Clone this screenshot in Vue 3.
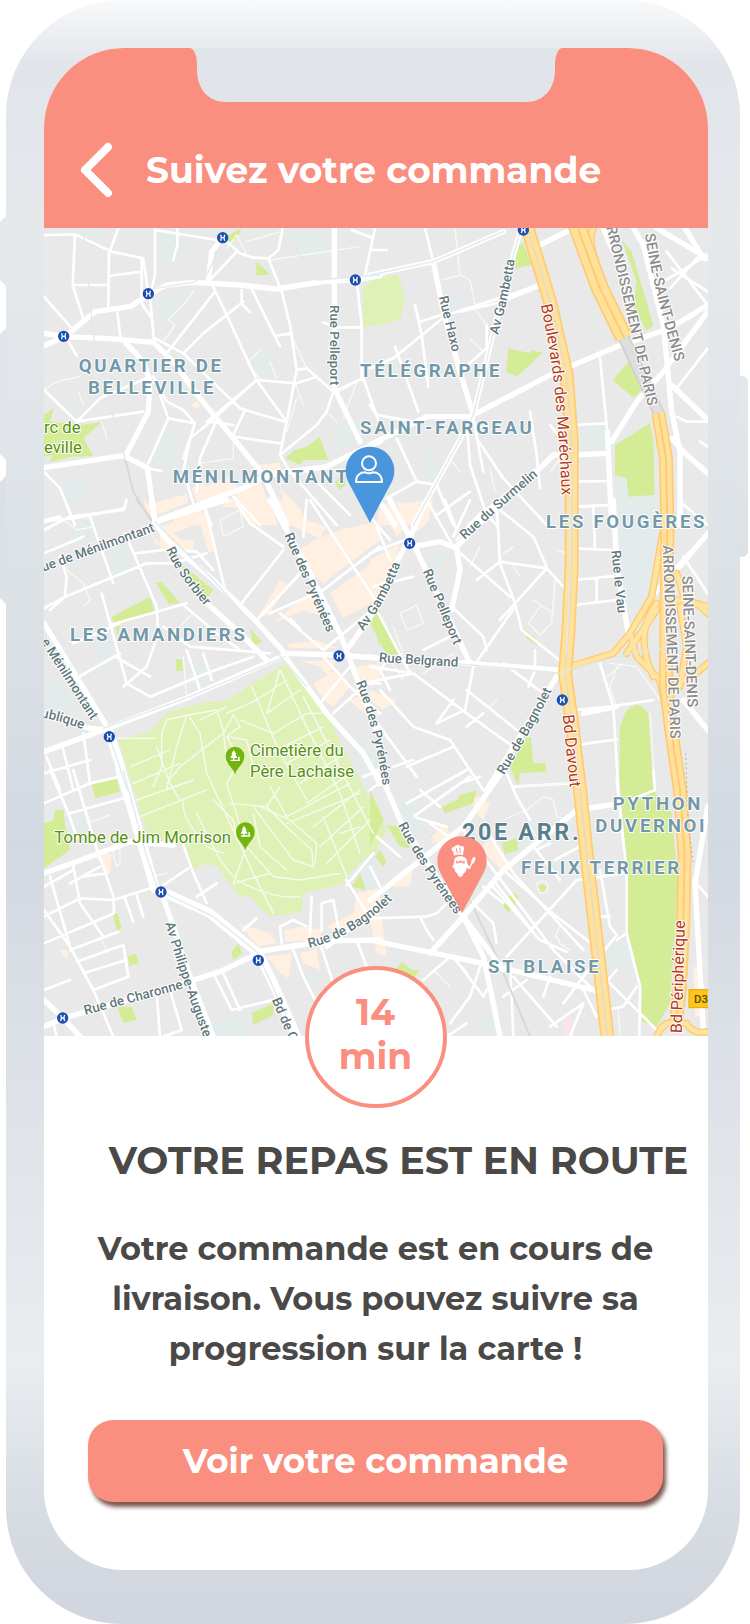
<script setup>
// Map units are thirds of a pixel; each tile has its own origin.
const tiles = [
  {
    x: 120, y: 675,
    pale: 'M110 9h75v45h-75z M345 20h60l30 60-60 40z M735 25h140v60l-90 15z M350 220l90-20-70 110z M620 410l60-35 30 60-60 25z M870 600l90-20 20 60-80 30z M360 620l60 10-30 90-60-20z M50 760l80 0 10 70-60 10z M600 810l60 0 10 50-60-10z M70 530l50 30-40 30z',
    light: 'M968 185L1020 160V300L970 305Z',
    park: 'M12 570L42 548 30 590 120 600 185 592 130 640 160 692 95 695 30 712 38 690 12 695ZM650 110L690 148 648 152ZM735 700L765 675 800 665 840 635 850 665 865 705 790 705 780 720ZM550 40L605 9 590 40 560 55ZM885 770L912 745 916 780 898 795Z',
    shop: 'M310 822L325 838 440 808 445 832 350 870 330 890ZM455 790L480 770 500 785 560 755 600 790 520 815 470 830ZM650 720L720 712 728 780 690 740ZM640 762L660 770 715 900H640L600 850 545 845ZM715 770L730 800 785 855 765 900H750ZM400 880L480 850 500 900H400ZM455 540l12-12 15 14-12 12z',
    minor: 'M12 30L105 28 215 80 310 100 325 210M105 28L98 180 128 275M235 9L207 85 205 250M205 153L305 140M305 100V235L330 272M345 9V150L330 210 342 350M345 15L530 45M412 9V60L400 105M105 180H200M12 215L95 310M80 340L110 392M232 262L243 350M548 40L600 85 640 98 685 100 715 75 728 9M685 100L725 200 750 300 770 435 740 590 720 690 750 740 890 900M510 165L590 80M525 200L380 385M510 165L560 270 650 465 740 590M610 230L490 325 430 385M605 195V235L630 262M635 192L720 365M710 332L755 325M345 340L430 385 600 550 740 592M650 465L770 475 830 455M770 435L800 430 880 500 860 560 830 600 720 690M650 465L500 600 450 640 430 740 460 835M360 510L385 580 325 715M330 455L180 520 110 590 12 495M110 590L310 560M385 580L465 595 430 700M340 455L380 530 430 555 465 595M530 585L480 700 470 800M580 635L720 655M575 640L615 555M500 590L650 465M880 500L970 460 1020 600M950 165L965 300V460M850 292 885 307H965M1005 9L975 150M935 15L1000 40M12 740L60 790 105 900M12 890L70 882 100 880 255 850V840M322 730L365 738M800 740L930 870M580 815L660 900M490 840L515 900M510 590L580 600',
    thin: 'M370 350L405 300 385 285 430 240 460 200M750 325L800 430M765 475L790 540M770 520L740 620M690 105L960 65M560 70L590 30 620 90M620 50L720 20M660 375L620 415 660 460M690 410L710 460M115 500L130 540M185 590L200 640M480 715L580 700V640M890 505L950 470 910 580M860 560L890 590M12 495L50 470 120 455',
    major: 'M12 325L75 335 200 340 340 352 400 410 480 520 580 640 670 750 740 900M12 362L75 335 165 260 270 245 325 210 380 180 460 172 600 180 710 192 860 168 950 165 1020 152M548 38L515 80 505 165M883 9V490L960 650M12 728L250 692 322 728 345 890M345 890L500 830 620 785 680 750 860 725 930 690 1020 650M258 355L310 410 330 470 325 560 258 690',
    waterline: 'M130 9L160 330 210 540 255 700M548 50L500 150 460 172 345 190M740 30L830 165 1020 150',
    grayline: 'M255 700L280 800 335 890',
  },
  {
    x: 1110, y: 675,
    pale: 'M610 600H712V675H610ZM735 760H775V820H850V900H735ZM240 225l50-20 10 40-50 10zM150 680l30-10 30 80-30 10z',
    light: 'M0 170L20 155 85 150 105 220 90 285 10 305 0 290Z',
    park: 'M440 65L460 55 485 120 435 130ZM415 370L480 385 485 376 518 383 440 455 408 440ZM755 45L785 80 850 300 830 318 790 240 800 170ZM780 405L820 490 790 518 728 465ZM735 660L840 595 850 640 853 810 775 815 770 760 735 750Z',
    shop: 'M30 850L60 830 80 900H20ZM80 825L120 860 130 900H100ZM140 860L185 875 165 900H140Z',
    minor: 'M165 9L190 110M0 430L70 400 230 270 510 180M75 365L145 560M270 260L400 230M350 300V370L270 440M0 540L20 570 130 590M290 590L300 720 350 870 380 900M320 640L400 760 530 900M480 560L500 690 510 790M310 580L340 740M605 600L712 595M605 770L715 768M630 845L720 840M920 575L950 590H1013M920 490L1013 370M930 830L1013 900M890 80L1013 240M900 190L990 90M880 170L1013 90M690 400L700 500 712 620M80 640L140 770 200 780 250 900M140 770L50 820M200 870L300 800M135 240L155 330 175 485M0 75H50M150 290L230 265M905 130L1013 200M990 650L1013 665M540 600L580 650',
    thin: 'M255 9L270 150 215 165M270 150L300 165 320 260 350 300M135 240L150 290M300 340L340 380M240 700L270 740M540 740L580 690M360 730L375 800',
    major: 'M0 150L190 110 400 20M190 110L220 260 270 440 310 570M450 20L400 200 310 570 130 900M0 660L170 575 300 575 540 450 740 365 900 310 1013 240M410 220L510 180M700 9L730 80M790 9L820 60 850 180 880 300 905 560 930 680V900M600 690L712 685M725 650L800 530 880 440 1013 260M712 620L725 900M300 900L520 720 550 690 600 690M905 480L1013 585M905 640L940 680 1013 745M860 9L1013 100M945 9L1000 100H1013M500 65L590 20M10 800L75 900',
    rail: 'M760 335L868 568',
    waterline: 'M0 150L190 110 400 20M450 20L400 200 310 570 130 900',
  },
  {
    x: 120, y: 1500,
    pale: 'M20 550L90 500 130 590 60 630H20ZM190 190L260 130 290 200 220 250ZM160 430l40 0 30 70-50 10zM470 500l40-20 10 60-40 10zM940 700L1020 780 980 850 940 780ZM110 60l60 10-20 60-60-10z',
    light: 'M735 490L860 640 890 700 970 860 1010 950 1005 1045 920 1130 905 1155 790 1180 785 1235 690 1250 630 1190 595 1185 530 1100 500 1090 460 1110 430 1035 320 1000 235 720 330 695 380 640 480 610 560 600 640 550Z',
    park: 'M215 350L330 290 345 340 240 372 235 410ZM348 250L365 245 420 310 385 312ZM420 190L520 270 500 295 440 230ZM408 478H425L430 512H408ZM630 385L665 425 640 440ZM665 455l20 15-10 8zM990 340L1020 320V440Z',
    shop: 'M360 80L495 35 510 70 525 155H505L480 70 400 100 425 120H460V150H360ZM320 10L335 110 375 140 345 130ZM680 0H760L800 60 860 80 840 115 740 70ZM825 120L900 90 990 70 1020 70V120L850 250 810 215 775 150ZM870 280L1010 180V300L910 355ZM655 350L720 240 745 255 685 345ZM700 370L790 290 835 275 880 380 850 350 790 330ZM745 432L830 420 890 445H745ZM780 482L890 480 865 530 840 500ZM820 550L890 510 930 560 880 620 850 600ZM940 500L1020 490V540L975 560ZM925 600L960 590 1020 640 1000 660Z',
    minor: 'M12 90L90 50 250 30 260 0M12 160L130 110M30 330L75 290 320 190 400 190 500 160M60 170L80 230 75 290 12 325M150 50L220 250M255 100L350 320 355 400 320 500 250 560M185 280L260 550 330 590 500 520 640 470M210 375L440 310M430 315L530 400 600 450M370 380L450 440 690 460M440 450L480 570M490 460L515 540M100 540L240 460M225 470L330 530M285 160L370 150 470 155 520 210M495 20L555 270M590 10L630 70 730 140M810 0L940 200 1020 320M730 150L620 290 605 310M655 355L790 210M690 340L850 270 940 200 1020 140M850 450L1020 310M850 450L720 340M850 470L930 560 1020 640M750 355L780 385M840 610L930 500M880 640L980 550H1020M20 770L60 870M65 730L100 870M130 700L150 850M12 820L150 780M970 830L1020 810M800 0L790 110M100 430L240 370M12 60L60 50',
    thin: 'M70 60L110 90 160 80M60 180L90 220 130 250 150 300 130 320M540 60L600 30 610 80 550 110ZM430 470L440 590M400 400L460 340M235 715H350M365 700L380 660 445 645 480 700 500 820M350 740L390 850 420 900M365 700V800L340 860M440 645L410 740 380 870M445 645L530 630 550 690 560 790M480 660L560 620M550 700L580 645 600 680 560 710 620 720 640 800M560 710L600 780 560 850M550 700L420 800 380 850M635 560L720 760 800 900M560 640L650 600 740 540M720 510L680 640 780 570M600 660L700 700 800 640 860 640M690 760L850 680M740 790L870 720M780 850L900 770M800 910L930 820M820 980L960 870M840 1040L970 920M860 1090L990 960M720 510L800 680 900 880 960 1060M790 590L1000 1000M270 800L390 750M280 850L420 790M290 900L460 840M300 950L500 870M500 820L640 1120 700 1240M560 850L620 1040M620 1040L580 1150 690 1120M620 1040L700 1130 780 1140 900 1120M640 920L700 1000 760 1080 820 1100 815 1050 740 980 680 920M660 920L750 960 830 1030 825 1090M640 940L660 1040 740 1110M590 1140Q700 1200 780 1190M430 900Q420 950 500 1040L550 1060M470 940L540 1080 580 1130M690 860L740 950 930 850M740 970L960 880M900 1000L960 980M850 950L920 1130M570 910L680 920 720 860M520 900L580 960 590 1020',
    major: 'M335 0L345 65 380 120 520 240 640 355 735 460M345 65L560 0M690 0L800 200 900 400 960 560 1020 720M735 460L900 465 1020 475M12 755L190 690 450 590 735 465M195 670L12 370M480 290L600 400 680 480M12 640L150 685 200 690M735 470L860 640 970 760 1020 850M920 450L1020 310',
    broad: 'M205 690L235 780 300 1010 345 1165',
    waterline: 'M345 65L520 240 600 330 800 560M205 700L262 870M190 685L450 590 735 470',
    grayline: 'M290 0L345 70',
  },
  {
    x: 1110, y: 1500,
    pale: 'M740 0H865L840 290 790 390 760 200ZM180 170L240 150 210 200ZM10 800l50 40-40 30z',
    park: 'M20 325L95 462 50 465 0 370V340ZM460 385L510 428 500 435 470 415ZM482 710L490 790H528V815L450 820 445 860 420 800 465 715ZM750 680L765 640Q800 590 835 640L850 870V870L905 940 925 1160 900 1510 860 1580 815 1565V1460L775 1310 770 1110 748 830Z',
    shop: 'M40 40L60 20 100 90 80 110ZM95 10L190 0 170 70 135 100ZM0 180L90 130 60 240 0 290ZM0 480L20 540 0 560ZM0 570L80 600 40 630 0 600Z',
    minor: 'M250 325L340 410 350 450M310 500L285 630 200 670M290 570L440 690M0 545L130 520 290 640 430 740M0 500L130 520M0 640L140 830M30 570L130 680 240 720 340 870M260 150L420 290M380 10L390 190 435 310 455 390 580 490M390 185L530 205 585 265M435 320L310 500M320 240L390 185M530 200L490 110 390 30M530 205L390 360M615 20L725 15M670 15L675 145M610 145L725 150M615 240L730 228M680 235V300M615 315L740 300M690 490L730 620 745 870M615 630L720 620M620 735L740 718M400 490L520 580M495 450V510L475 560M435 860L600 850M200 670L250 600M60 470L30 510 60 570M0 160L130 110M20 80L60 180M225 0L260 90M300 0L250 110M260 120L330 40M40 840L0 870M70 800L130 780M110 800L250 740M340 640L290 680M720 620L850 600M10 260L130 230M0 50L60 120M170 0L250 140M270 850L330 830M940 170L1013 280M20 330L120 520M160 450L240 410',
    thin: 'M90 340L140 315 160 370 110 390ZM70 380L120 520M555 240L545 370 510 405 475 370 510 320M490 300L550 340M560 150L590 160M360 620L380 600M330 140L300 200M430 200L450 230M720 490L800 500 870 600M700 540L760 490M740 620L720 560 740 500M60 480L100 540M160 520L250 460M840 640L855 870M430 140L400 160',
    major: 'M0 470L300 490 585 512M60 0L130 130 220 320 300 490M170 0L130 90 0 340M130 140L210 125 260 145 270 210 245 330M260 140L400 0M560 530L350 870M930 200L1013 100M845 290L960 160M940 600L1013 690M730 0L740 200 775 400M640 640L740 620',
    link: 'M878 100L845 290 780 400 730 460 600 500M780 400L800 470 870 540 890 640M770 460L860 330M860 310Q790 400 850 530M895 310Q960 280 1013 340M900 560Q960 540 1013 490M920 220L945 300 1013 320M930 320L950 440 930 560',
    waterline: 'M600 220L590 460M585 512L780 460 900 440H1013M250 490L585 520M0 460L250 490M600 0V200',
  },
  {
    x: 120, y: 2310,
    pale: 'M80 130l50 0 10 50-50 10zM520 760L600 730 640 790 600 800H520ZM790 610l40 0 10 40-40 0zM960 290L1010 270 1020 350 980 350Z',
    park: 'M155 40L230 20 240 65 165 85ZM12 160L40 150 45 120 70 120 75 160 90 240 12 295ZM218 430H232L245 475 232 487ZM263 558L288 552 295 580 268 588ZM575 545L595 522 607 550 580 570ZM232 710L275 710 290 750 250 758ZM635 730L700 700 700 735 640 765ZM935 350L960 310 978 360Z',
    shop: 'M595 460L690 490 710 520 655 530ZM735 480L780 470 850 480 830 510 735 515ZM860 470L940 430 950 370 1020 355V390L900 490ZM675 560L755 550 745 625 720 610 700 580ZM780 550L830 535 840 600 790 580ZM1000 440L1020 420V500H1000ZM185 255L215 250 210 310 198 318ZM62 540l18 0 5 20-15 0z',
    minor: 'M12 100L150 40 240 20M90 130L250 85M30 320L90 530 160 660 220 800M12 440L120 385 220 390 345 350M100 290L120 400 190 500M180 260L220 380 222 430 12 520M12 420L90 530M90 540L235 485M110 575L250 525 265 620 160 660M130 610L260 570M255 385L280 455M290 375L310 440M12 350L100 300M12 660L90 630M370 345L445 295M430 225L460 310 500 400M520 610L575 720 700 690M550 610L600 720M350 670L360 800M390 660L425 780 370 800M760 540L790 620 825 690M725 520L720 470 760 450 800 470M845 480V400L880 390 900 500M815 380L810 490M920 330L980 430M920 345L1000 250M30 0L85 130 110 200M100 0L180 270M90 340L180 290M125 320L200 310M470 380L530 340M610 480L650 445M40 760L50 800M840 520L880 640M950 510L980 590',
    thin: 'M215 230L230 290 240 280V220M330 320L380 310M140 160L210 135M180 500L200 540',
    major: 'M12 310L150 260 270 215 400 225M365 370L400 470 450 620 520 800M655 550L540 605 350 665 70 745 12 770M655 545L780 525 900 512 1020 510M12 690L70 745 120 800M860 530L1020 400',
    broad: 'M240 0L300 200 345 355 510 430 655 550 700 640 770 800',
    waterline: 'M250 0L320 260 355 360 520 440 650 545 740 740',
  },
  {
    x: 1110, y: 2310,
    pale: 'M90 120L140 90 160 170 110 200ZM290 320l60-30 20 50-60 30zM690 570L770 500 780 580 720 620ZM300 750l60-20 20 50-60 10zM400 220l60-30 20 30-60 20z',
    light: 'M0 60L30 120 50 180 20 240 0 260Z',
    park: 'M215 110L260 90 270 75 320 60 310 100 225 130ZM50 165L90 170 120 235 90 230ZM15 260L30 240 50 275 40 290ZM395 220L440 205 445 240 405 252ZM392 400L430 368 448 380 415 428ZM505 352l10-10 15 8-8 15-12 2zM75 600L95 575 125 600 150 600 130 625ZM0 60L40 150 0 230Z',
    shop: 'M180 210L220 160 240 190 210 230ZM300 90L325 80 360 100 340 150 320 130ZM330 230L360 210 430 290 400 310ZM0 450L35 440 50 560 20 550ZM70 320L130 280 120 350 70 350ZM970 590H985L1000 740H975Z',
    minor: 'M230 170L130 140 300 20M150 60L210 110M110 100L290 0M410 10L440 80 480 150M280 180L550 540 680 670M360 340L510 510 590 545M400 300L560 440 690 540M180 160L250 210M350 180L430 310 640 540M410 560L620 330 760 310M490 230L570 330M370 330L500 500M290 380L370 460 380 520M500 240L540 220M555 270L610 240 660 215M690 300L720 470 740 495M680 440H720M150 440L170 480 190 510M340 350L400 400M0 445L170 440 200 430 230 400M740 495L640 620 580 700M740 30L770 300 770 490 810 650 808 800M770 490L740 510M700 620L860 780M680 670L740 600M640 660L680 740M160 630L240 560M250 560L340 680 350 660M420 580L430 800M340 560L300 680 240 760M430 620L560 770M540 620L520 680M470 630L400 680M710 720L760 710 800 650M780 90L855 60 850 0M980 340L1013 380M230 800L290 760M540 770L640 700 600 800M20 0L50 60M0 290L30 350M20 200L90 260',
    thin: 'M400 150L470 120 520 80 550 90 560 140 600 150M480 170L500 200M560 500L570 520 600 540M745 720L750 790M570 470L555 500M190 600L240 650M280 590L310 640M500 345Q505 330 525 335Q540 345 530 365L510 370ZM450 50L590 40',
    major: 'M40 30L90 150 180 290 280 440 340 560 370 700 390 800M400 0L280 170 0 390M615 125L400 300 280 440 180 550M0 510L340 580 670 660M620 120L750 100M1013 110L975 340 1000 780M280 440L400 600',
    waterline: 'M60 60L200 220',
    grayline: 'M300 390L380 560 480 800',
  },
]

const roadLabels = [
  [120, 675, 'M870 240V520', 'Rue Pelleport'],
  [1110, 675, 'M206 216L256 420', 'Rue Haxo'],
  [1110, 675, 'M384 330Q418 210 440 70', 'Av Gambetta'],
  [1110, 1500, 'M284 120L396 20 516 -84', 'Rue du Surmelin'],
  [120, 1500, 'M-14 224L360 88', 'Rue de Ménilmontant'],
  [120, 1500, 'M378 148Q410 225 510 335', 'Rue Sorbier'],
  [120, 1500, 'M733 106L878 436', 'Rue des Pyrénées'],
  [120, 1500, 'M970 394Q1044 296 1092 165', 'Av Gambetta'],
  [120, 1500, 'M2 425L188 715', 'e Ménilmontant'],
  [120, 1500, 'M2 652Q70 664 150 696', 'ublique'],
  [120, 1500, 'M948 548Q1010 700 1034 900', 'Rue des Pyrénées'],
  [1110, 1500, 'M158 214L266 470', 'Rue Pelleport'],
  [1110, 1500, 'M26 486L290 502', 'Rue Belgrand'],
  [1110, 1500, 'M724 152L746 370', 'Rue le Vau'],
  [1110, 1500, 'M402 826Q486 690 562 540', 'Rue de Bagnolet'],
  [120, 2310, 'M808 534Q950 500 1076 370', 'Rue de Bagnolet'],
  [120, 2310, 'M376 460Q430 650 510 850', 'Av Philippe-Auguste'],
  [120, 2310, 'M136 735L450 650', 'Rue de Charonne'],
  [120, 2310, 'M695 690L765 850', 'Bd de C'],
  [1110, 2310, 'M84 166Q148 286 275 460', 'Rue des Pyrénées'],
  [1110, 675, 'M512 240C552 430 562 520 580 900', 'Boulevards des Maréchaux', 'red'],
  [1110, 1500, 'M578 645L604 900', 'Bd Davout', 'red'],
  [1110, 2310, 'M935 790L947 400', 'Bd Périphérique', 'red'],
  [1110, 675, 'M702 -22Q770 260 846 600', 'ARRONDISSEMENT DE PARIS', 'limit'],
  [1110, 675, 'M824 28Q858 230 940 490', 'SEINE-SAINT-DENIS', 'limit'],
  [1110, 1500, 'M878 136L904 790', 'ARRONDISSEMENT DE PARIS', 'limit'],
  [1110, 1500, 'M936 228L956 700', 'SEINE-SAINT-DENIS', 'limit'],
]

const places = [
  [236, 1115, 'QUARTIER DE', 'area'],
  [264, 1182, 'BELLEVILLE', 'area'],
  [518, 1448, 'MÉNILMONTANT', 'area'],
  [1080, 1132, 'TÉLÉGRAPHE', 'area'],
  [1080, 1302, 'SAINT-FARGEAU', 'area'],
  [1638, 1584, 'LES FOUGÈRES', 'area'],
  [210, 1923, 'LES AMANDIERS', 'area'],
  [1838, 2430, 'PYTHON', 'area'],
  [1786, 2496, 'DUVERNOI', 'area'],
  [1563, 2622, 'FELIX TERRIER', 'area'],
  [1464, 2918, 'ST BLAISE', 'area'],
  [1386, 2520, '20E ARR.', 'town'],
  [132, 1300, 'rc de', 'poi'],
  [132, 1360, 'eville', 'poi'],
  [750, 2268, 'Cimetière du', 'poi'],
  [750, 2332, 'Père Lachaise', 'poi'],
  [163, 2530, 'Tombe de Jim Morrison', 'poi'],
]

const stations = [
  [668, 713], [445, 881], [191, 1009], [1066, 840], [1570, 690], [1229, 1630],
  [1017, 1968], [328, 2210], [1687, 2100], [483, 2676], [775, 2881], [188, 3054],
]

const trees = [[705, 2270], [736, 2497]]

const boulevard = 'M470 0L540 230 590 450 605 650 605 1025 595 1225 585 1345 605 1485 630 1695 655 1935 690 2235 712 2435'
const ringNorth = 'M620 0L660 110 690 190 762 338'
const ringSouth = 'M865 565L888 700 892 900 888 1385 905 1525 930 1695 944 1885 940 2085 930 2285 918 2390'
const ringSlip = 'M672 5Q650 40 684 130'
const ringExit = 'M860 2435Q880 2385 915 2395L950 2395Q970 2430 1013 2420'
</script>

<template>
  <div class="phone">
    <span class="key key-mute"></span>
    <span class="key key-up"></span>
    <span class="key key-down"></span>
    <span class="key key-power"></span>

    <main class="screen">
      <svg class="notch" viewBox="0 0 380 56" aria-hidden="true">
        <path d="M0 0C9 0 11 9 11 19V25C12 43 23 55 40 55H340C357 55 368 43 369 25V19C369 9 371 0 380 0Z" />
      </svg>

      <header class="bar">
        <button class="back" type="button" aria-label="Retour">
          <svg viewBox="0 0 34 56" aria-hidden="true"><path d="M28 5L5 28L28 51" /></svg>
        </button>
        <h1>Suivez votre commande</h1>
      </header>

      <svg class="map" viewBox="132 684 1992 2424" role="img" aria-label="Carte de la livraison">
        <rect class="ground" x="132" y="684" width="1992" height="2424" />
        <g v-for="(t, i) in tiles" :key="'a' + i" :transform="`translate(${t.x} ${t.y})`">
          <path class="pale" :d="t.pale" />
          <path class="light" :d="t.light" />
          <path class="shop" :d="t.shop" />
          <path class="park" :d="t.park" />
          <rect v-if="i === 5" class="rose" x="580" y="745" width="30" height="55" />
        </g>
        <g v-for="(t, i) in tiles" :key="'b' + i" :transform="`translate(${t.x} ${t.y})`">
          <path class="line thin" :d="t.thin" />
          <path class="line minor" :d="t.minor" />
          <path class="line grayline" :d="t.grayline" />
        </g>
        <g v-for="(t, i) in tiles" :key="'c' + i" :transform="`translate(${t.x} ${t.y})`">
          <path class="line major" :d="t.major" />
          <path class="line broad" :d="t.broad" />
          <path class="line link-edge" :d="t.link" />
          <path class="line link" :d="t.link" />
          <path class="line rail-edge" :d="t.rail" />
          <path class="line rail" :d="t.rail" />
        </g>
        <g transform="translate(1110 675)">
          <path class="line link-edge" :d="ringSlip" />
          <path class="line link" :d="ringSlip" />
          <path class="line highway-edge" :d="boulevard" />
          <path class="line highway" :d="boulevard" />
          <path class="line highway-core" :d="boulevard" />
          <path class="line highway-edge wide" :d="ringNorth" />
          <path class="line highway wide" :d="ringNorth" />
          <path class="line stripe" :d="ringNorth" />
          <path class="line highway-edge" :d="ringSouth" />
          <path class="line highway" :d="ringSouth" />
          <path class="line stripe" :d="ringSouth" />
          <path class="line link-edge" :d="ringExit" />
          <path class="line link" :d="ringExit" />
          <path class="border-line" d="M947 1585L955 1800 970 1920" />
        </g>
        <g v-for="(t, i) in tiles" :key="'d' + i" :transform="`translate(${t.x} ${t.y})`">
          <path class="line waterline" :d="t.waterline" />
        </g>

        <g v-for="([x, y, d, text, kind], i) in roadLabels" :key="'r' + i" :transform="`translate(${x} ${y})`">
          <path :id="'road-' + i" class="guide" :d="d" />
          <text :class="['road', kind]"><textPath :href="'#road-' + i">{{ text }}</textPath></text>
        </g>
        <text v-for="([x, y, text, kind], i) in places" :key="'p' + i" :class="kind" :x="x" :y="y">{{ text }}</text>

        <g v-for="([x, y], i) in stations" :key="'s' + i" :transform="`translate(${x} ${y})`">
          <circle class="metro" r="17" />
          <path class="metro-mark" d="M-6 -9Q-2 0 -6 9M6 -9Q2 0 6 9M-4 0H4" />
        </g>
        <g v-for="([x, y], i) in trees" :key="'t' + i" :transform="`translate(${x} ${y})`">
          <path class="tree-pin" d="M0 54C-5 32 -28 24 -28 -2A28 28 0 0 1 28 -2C28 24 5 32 0 54Z" />
          <path class="tree" d="M-4 -20L4 -8H1L7 4H-2V9H15V13H-13V9H-6V4H-14L-8 -8H-11ZM9 0h5v9h-5z" />
        </g>
        <rect class="shield" x="2067" y="2969" width="64" height="54" />
        <text class="shield-text" x="2082" y="3008">D3</text>

        <g transform="translate(1110 1415)">
          <path class="pin-client" d="M0 153L-64 33A73 73 0 1 1 64 33Z" />
          <circle class="person" cx="-3" cy="-25" r="21" />
          <path class="person" d="M-42 31C-42 10 -28 2 -14 2Q-3 8 8 2C22 2 36 10 36 31Z" />
        </g>
        <g transform="translate(1386 2585)">
          <path class="pin-chef" d="M0 155L-65 33A74 74 0 1 1 65 33Z" />
          <path class="chef" d="M-24 -18L-26 -30C-34 -34 -33 -45 -23 -44C-20 -52 -8 -52 -6 -46C2 -50 10 -42 5 -34L3 -19Q-10 -24 -24 -18Z" />
          <path class="chef" d="M-23 -4C-22 -20 12 -20 14 -4L17 8L22 14L21 22L14 18C14 28 8 34 5 35C4 42 -2 46 -5 46C-8 46 -13 42 -14 35C-20 33 -23 26 -23 18L-28 20V12L-25 8Z" />
          <path class="chef-face" d="M-17 -3H8Q10 8 2 5Q-4 0 -11 5Q-20 8 -17 -3Z" />
          <path class="chef-line" d="M-17 -40L-14 -25M-6 -42L-6 -26" />
          <circle class="chef" cx="-11" cy="0" r="2" />
          <circle class="chef" cx="2" cy="0" r="2" />
          <path class="spoon" d="M22 20L30 4" />
          <ellipse class="chef" cx="34" cy="-4" rx="5" ry="11" transform="rotate(20 34 -4)" />
        </g>
      </svg>

      <section class="status">
        <p class="eta">14<br />min</p>
        <h2>VOTRE REPAS EST EN ROUTE</h2>
        <p class="message">Votre commande est en cours de livraison. Vous pouvez suivre sa progression sur la carte !</p>
        <button class="order" type="button">Voir votre commande</button>
      </section>
    </main>
  </div>
</template>

<style>
body {
  background: #fff;
  overflow-x: hidden;
}
</style>

<style scoped>
.phone {
  position: relative;
  box-sizing: border-box;
  margin: 0 10px 0 6px;
  padding: 48px 32px 54px 38px;
  border-radius: 116px;
  background: linear-gradient(#f8f9fa 0%, #e1e5ea 4%, #e5e9ec 14%, #dce1e6 38%, #d3d9e1 52%, #dce0e7 64%, #e4e8ec 76%, #e9edf0 84%, #d9dee4 92%, #d0d5de 100%);
  font-family: Montserrat, Inter, "Liberation Sans", sans-serif;
  font-weight: 700;
}
.key {
  position: absolute;
  left: -6px;
  width: 6px;
  clip-path: polygon(0 6px, 100% 0, 100% 100%, 0 calc(100% - 6px));
}
.key-mute { top: 216px; height: 70px; background: #e4e8eb; }
.key-up { top: 328px; height: 132px; background: #e1e5e9; }
.key-down { top: 476px; height: 128px; background: #dce1e6; }
.key-power {
  top: 376px;
  right: -8px;
  left: auto;
  width: 8px;
  height: 181px;
  border-radius: 0 6px 6px 0;
  background: linear-gradient(#e3e8eb, #dce1e6);
  clip-path: none;
}
.screen {
  position: relative;
  overflow: hidden;
  border-radius: 80px;
  background: #fff;
}
.notch {
  position: absolute;
  top: -1px;
  left: 50%;
  width: 380px;
  transform: translateX(-50%);
}
.notch path { fill: #e1e5ea; }
.bar {
  display: flex;
  align-items: center;
  gap: 32px;
  box-sizing: border-box;
  height: 180px;
  padding: 64px 38px 0 36px;
  background: #fa8f80;
}
.back {
  display: flex;
  padding: 0;
  border: 0;
  background: none;
  cursor: pointer;
}
.back svg { width: 34px; }
.back path {
  fill: none;
  stroke: #fff;
  stroke-width: 8;
  stroke-linecap: round;
  stroke-linejoin: round;
}
h1 {
  margin: 0;
  color: #fff;
  font-size: 36px;
  line-height: 44px;
}
.map {
  display: block;
  width: 100%;
  font-family: Roboto, "Liberation Sans", sans-serif;
}
.ground { fill: #e9e9e9; }
.pale { fill: #e4ebeb; }
.light { fill: #e0f1b8; }
.park { fill: #d3ec95; }
.shop { fill: #fff0e1; }
.rose { fill: #fce4ea; }
.line {
  fill: none;
  stroke: #fff;
  stroke-linecap: round;
  stroke-linejoin: round;
}
.thin { stroke: #f7fbef; stroke-width: 4; }
.minor { stroke-width: 8; }
.major { stroke-width: 16; }
.broad { stroke-width: 28; }
.grayline { stroke: #d3dadb; stroke-width: 6; }
.waterline { stroke: #dfeaec; stroke-width: 4; }
.rail-edge { stroke: #d0d0d0; stroke-width: 36; stroke-linecap: butt; }
.rail { stroke: #dedede; stroke-width: 26; stroke-linecap: butt; }
.link-edge { stroke: #ffcb70; stroke-width: 22; }
.link { stroke: #ffe3a0; stroke-width: 14; }
.highway-edge { stroke: #ffcb70; stroke-width: 42; stroke-linecap: butt; }
.highway { stroke: #ffe19b; stroke-width: 32; stroke-linecap: butt; }
.highway-core { stroke: #e6dcc4; stroke-width: 5; }
.highway-edge.wide { stroke-width: 54; }
.highway.wide { stroke-width: 44; }
.stripe { stroke: #ffcb70; stroke-width: 6; }
.border-line {
  fill: none;
  stroke: #b5b5b5;
  stroke-width: 3;
  stroke-dasharray: 6 8;
}
.guide { fill: none; }
text {
  stroke: #fff;
  stroke-width: 6px;
  stroke-linejoin: round;
  paint-order: stroke;
}
.road { fill: #60777b; font-size: 40px; font-weight: 500; }
.red { fill: #b23a22; font-size: 48px; font-weight: 400; }
.limit { fill: #8c8c8c; font-size: 44px; }
.area { fill: #7399a9; font-size: 56px; font-weight: 700; letter-spacing: 8px; }
.town { fill: #58808c; font-size: 70px; font-weight: 700; letter-spacing: 8px; }
.poi { fill: #56900e; font-size: 50px; font-weight: 400; }
.metro { fill: #1d4fb3; }
.metro-mark { fill: none; stroke: #fff; stroke-width: 4; }
.tree-pin { fill: #74b40e; }
.tree { fill: #fff; }
.shield { fill: #ffc51a; stroke: #e8a900; stroke-width: 3; }
.shield-text { fill: #5b4a10; stroke: none; font-size: 34px; font-weight: 500; }
.pin-client { fill: #4a96dc; }
.person { fill: none; stroke: #fff; stroke-width: 6; stroke-linejoin: round; }
.pin-chef { fill: #fa8f80; }
.chef { fill: #fff; }
.chef-face { fill: #fa8f80; }
.chef-line { fill: none; stroke: #fa8f80; stroke-width: 3; }
.spoon { fill: none; stroke: #fff; stroke-width: 4; stroke-linecap: round; }
.status {
  position: relative;
  display: flex;
  flex-direction: column;
  align-items: center;
  margin-top: -70px;
  padding: 0 45px 68px 44px;
  color: #4a4948;
}
.eta {
  display: grid;
  place-content: center;
  box-sizing: border-box;
  width: 142px;
  height: 142px;
  margin: 0;
  padding-bottom: 6px;
  border: 4px solid #fa8f80;
  border-radius: 50%;
  background: #fff;
  color: #fa8f80;
  font-size: 36px;
  line-height: 44px;
  text-align: center;
}
h2 {
  margin: 28px 0 0 46px;
  font-size: 38px;
  line-height: 50px;
  white-space: nowrap;
}
.message {
  margin: 38px 0 46px;
  font-size: 32px;
  line-height: 50px;
  text-align: center;
}
.order {
  align-self: stretch;
  height: 82px;
  border: 0;
  border-radius: 25px;
  background: #fa8f80;
  box-shadow: 3px 5px 4px #7d5650;
  color: #fff;
  font: inherit;
  font-size: 34px;
  cursor: pointer;
}
</style>
